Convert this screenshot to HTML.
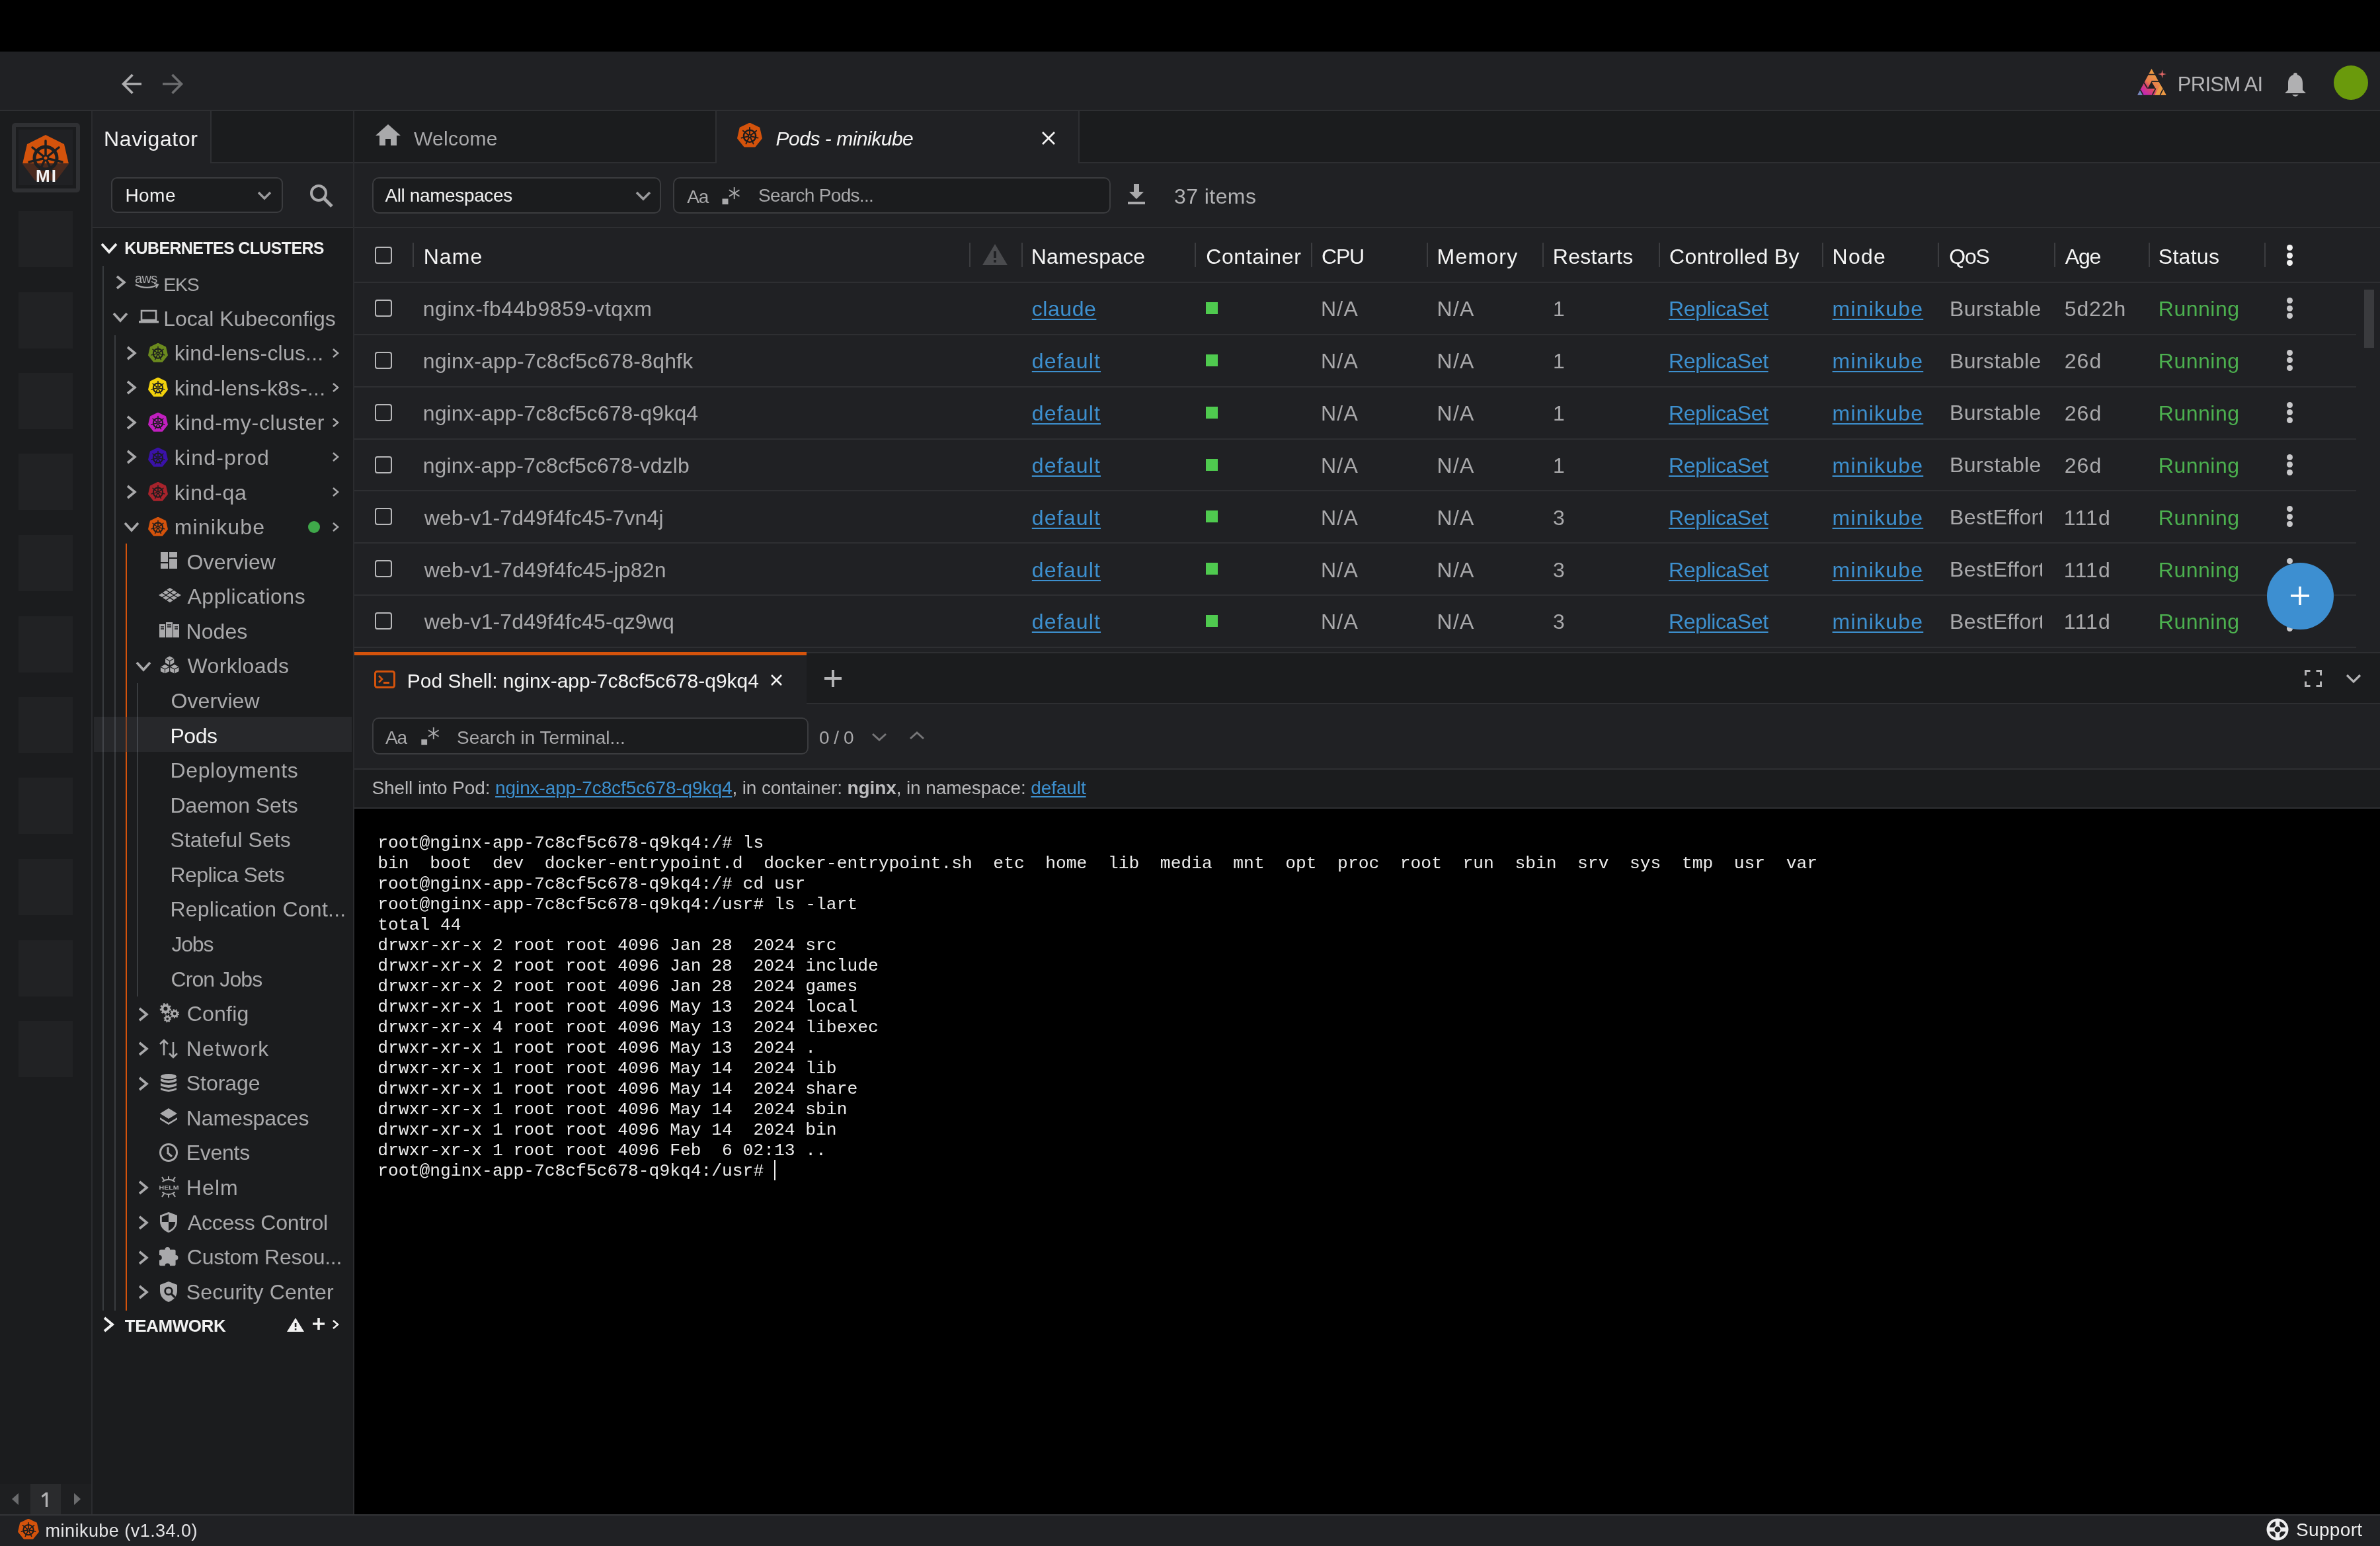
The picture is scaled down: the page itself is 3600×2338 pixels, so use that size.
<!DOCTYPE html>
<html><head><meta charset="utf-8"><title>Lens</title>
<style>
html,body{margin:0;padding:0;}
body{width:3600px;height:2338px;position:relative;overflow:hidden;background:#000;font-family:"Liberation Sans",sans-serif;}
body div, body svg{position:absolute;} svg{overflow:visible;}
.t{white-space:nowrap;line-height:1;}
</style></head><body><div id="root" style="left:0;top:0;width:3600px;height:2338px;overflow:hidden;will-change:transform;background:#000;">
<svg width="0" height="0" style="position:absolute">
<defs>
<symbol id="k8s" viewBox="0 0 100 100">
<polygon points="50,2 87.5,20 96.8,60.5 70.8,93 29.2,93 3.2,60.5 12.5,20" stroke-linejoin="round" stroke-width="6" stroke="currentColor" fill="currentColor"/>
<g stroke="#1b1c1e" fill="none" stroke-width="6.5">
<circle cx="50" cy="52" r="24"/>
</g>
<g stroke="#1b1c1e" stroke-width="5" stroke-linecap="round">
<line x1="50" y1="52" x2="50" y2="18"/>
<line x1="50" y1="52" x2="76.6" y2="30.8"/>
<line x1="50" y1="52" x2="83.1" y2="59.6"/>
<line x1="50" y1="52" x2="64.7" y2="82.6"/>
<line x1="50" y1="52" x2="35.3" y2="82.6"/>
<line x1="50" y1="52" x2="16.9" y2="59.6"/>
<line x1="50" y1="52" x2="23.4" y2="30.8"/>
</g>
<circle cx="50" cy="52" r="7" fill="#1b1c1e"/>
<circle cx="50" cy="52" r="3" fill="currentColor"/>
</symbol>
</defs>
</svg>

<div style="left:0px;top:78px;width:3600px;height:88px;background:#202124;"></div>
<div style="left:0px;top:166px;width:3600px;height:2px;background:#2e2f32;"></div>
<svg style="left:180px;top:110px;" width="36" height="34" viewBox="0 0 36 34"><path d="M34 17H7M20.5 3L6.5 17L20.5 31" stroke="#aeaeb0" stroke-width="3.6" fill="none"/></svg>
<svg style="left:244px;top:110px;" width="36" height="34" viewBox="0 0 36 34"><path d="M2 17H30M16.5 3L30.5 17L16.5 31" stroke="#6c6d6f" stroke-width="3.6" fill="none"/></svg>
<svg style="left:3225px;top:95px;" width="60" height="55" viewBox="0 0 60 55"><defs><linearGradient id="pg" x1="0.75" y1="0.35" x2="0.2" y2="0.95"><stop offset="0" stop-color="#eb9a44"/><stop offset="0.45" stop-color="#e87a4e"/><stop offset="0.62" stop-color="#d9436a"/><stop offset="1" stop-color="#c426b8"/></linearGradient></defs>
<path d="M29.5 8.9 L51.6 48.7 L8.2 48.7 Z M29.3 28.2 L23.4 38.9 L35.7 38.9 Z" fill="url(#pg)" fill-rule="evenodd"/>
<path d="M34 48.7 L51.6 48.7 L43 33 Z" fill="#eb9a44"/>
<path d="M8.2 48.7 L16.5 48.7 L12.3 41.2 Z" fill="#6a8fb8"/>
<g stroke="#202124" stroke-width="1.7" fill="none">
<path d="M22 17.6 H37"/><path d="M29.3 28.2 H41"/><path d="M23.4 38.9 L18 29.8"/><path d="M35.7 38.9 L30.5 48.7"/><path d="M12.5 41 L16.8 48.7"/><path d="M46.5 40.3 L42.4 48.7"/>
</g>
<path d="M45.5 10.5 L46.6 16 L52 17.1 L46.6 18.2 L45.5 23.6 L44.4 18.2 L39 17.1 L44.4 16 Z" fill="#ea6a6a"/></svg>
<div class="t" style="left:3293.8px;top:111.86px;font-size:31px;color:#b4b4b6;font-weight:normal;font-family:'Liberation Sans';letter-spacing:-0.714px;">PRISM AI</div>
<svg style="left:3454px;top:106px;" width="36" height="42" viewBox="0 0 36 42"><path d="M18 4 C20 4 21 5 21 7 C27 9 29 14 29 20 L29 30 L34 35 L2 35 L7 30 L7 20 C7 14 9 9 15 7 C15 5 16 4 18 4 Z" fill="#b0b0b2"/>
<path d="M13 37 Q18 43 23 37 Z" fill="#b0b0b2"/></svg>
<div style="left:3530px;top:99px;width:52px;height:52px;border-radius:50%;background:#6a9a0c;"></div>
<div style="left:0px;top:168px;width:138px;height:2122px;background:#1b1c1e;"></div>
<div style="left:138px;top:168px;width:2px;height:2122px;background:#2b2c2f;"></div>
<div style="left:18px;top:186px;width:91px;height:93px;border:6px solid #2f3033;border-radius:5px;background:#1b1c1e;"></div>
<div style="left:28px;top:196px;width:82px;height:84px;background:#202124;"></div>
<svg style="left:30px;top:201px;" width="78" height="82" viewBox="0 0 78 82"><defs><clipPath id="topc"><rect x="0" y="0" width="78" height="46"/></clipPath><clipPath id="botc"><rect x="0" y="46" width="78" height="40"/></clipPath></defs>
<g clip-path="url(#botc)"><polygon points="39,3 67,17 74,47 55,72 23,72 4,47 11,17" fill="#4a2a1e"/></g>
<g clip-path="url(#topc)"><polygon points="39,3 67,17 74,47 55,72 23,72 4,47 11,17" fill="#d4530c"/></g>
<g stroke="#1e1f21" fill="none" stroke-width="5"><circle cx="39" cy="38" r="17"/></g>
<g stroke="#1e1f21" stroke-width="3.5" stroke-linecap="round">
<line x1="39" y1="38" x2="39" y2="12"/><line x1="39" y1="38" x2="59" y2="22"/><line x1="39" y1="38" x2="64" y2="44"/><line x1="39" y1="38" x2="50" y2="61"/><line x1="39" y1="38" x2="28" y2="61"/><line x1="39" y1="38" x2="14" y2="44"/><line x1="39" y1="38" x2="19" y2="22"/></g>
<circle cx="39" cy="38" r="5" fill="#1e1f21"/><circle cx="39" cy="38" r="2.5" fill="#d4530c"/></svg>
<div class="t" style="left:54px;top:253.09px;font-size:26px;color:#f4f4f4;font-weight:bold;font-family:'Liberation Sans';letter-spacing:2.2px;">MI</div>
<div style="left:28px;top:319px;width:82px;height:85px;background:#212224;"></div>
<div style="left:28px;top:442px;width:82px;height:85px;background:#212224;"></div>
<div style="left:28px;top:564px;width:82px;height:85px;background:#212224;"></div>
<div style="left:28px;top:686px;width:82px;height:85px;background:#212224;"></div>
<div style="left:28px;top:809px;width:82px;height:85px;background:#212224;"></div>
<div style="left:28px;top:932px;width:82px;height:85px;background:#212224;"></div>
<div style="left:28px;top:1054px;width:82px;height:85px;background:#212224;"></div>
<div style="left:28px;top:1176px;width:82px;height:85px;background:#212224;"></div>
<div style="left:28px;top:1299px;width:82px;height:85px;background:#212224;"></div>
<div style="left:28px;top:1422px;width:82px;height:85px;background:#212224;"></div>
<div style="left:28px;top:1544px;width:82px;height:85px;background:#212224;"></div>
<div style="left:0px;top:2244px;width:138px;height:46px;background:#1e1f21;"></div>
<div style="left:46px;top:2244px;width:46px;height:46px;background:#2a2b2d;"></div>
<svg style="left:16px;top:2256px;" width="14" height="22" viewBox="0 0 14 22"><path d="M12 2 L2 11 L12 20 Z" fill="#6a6b6d"/></svg>
<svg style="left:110px;top:2256px;" width="14" height="22" viewBox="0 0 14 22"><path d="M2 2 L12 11 L2 20 Z" fill="#6a6b6d"/></svg>
<svg style="left:60px;top:2254px;" width="16" height="28" viewBox="0 0 16 28"><path d="M10.5 3 V25" stroke="#b2b2b4" stroke-width="3.3"/><path d="M3.5 9.5 L10.5 3.8" stroke="#b2b2b4" stroke-width="3"/></svg>
<div style="left:140px;top:168px;width:394px;height:79px;background:#1b1c1e;"></div>
<div style="left:140px;top:168px;width:178px;height:79px;background:#202124;"></div>
<div style="left:318px;top:168px;width:2px;height:79px;background:#2e2f32;"></div>
<div style="left:320px;top:245px;width:214px;height:2px;background:#2e2f32;"></div>
<div style="left:140px;top:247px;width:394px;height:96px;background:#202124;"></div>
<div style="left:140px;top:343px;width:394px;height:2px;background:#2e2f32;"></div>
<div style="left:140px;top:345px;width:394px;height:1945px;background:#1b1c1e;"></div>
<div style="left:534px;top:168px;width:2px;height:2122px;background:#2b2c2f;"></div>
<div class="t" style="left:157px;top:194.01px;font-size:32px;color:#f1f1f1;font-weight:normal;font-family:'Liberation Sans';letter-spacing:0.625px;">Navigator</div>
<div style="left:168px;top:268px;width:256px;height:50px;border:2px solid #3b3c3f;border-radius:9px;background:#1b1c1e;"></div>
<div class="t" style="left:189.4px;top:281.90px;font-size:28px;color:#f1f1f1;font-weight:normal;font-family:'Liberation Sans';letter-spacing:0.467px;">Home</div>
<svg style="left:388px;top:288px;" width="24" height="16" viewBox="0 0 24 16"><path d="M3 3 L12 12 L21 3" stroke="#9a9a9c" stroke-width="3.4" fill="none"/></svg>
<svg style="left:466px;top:276px;" width="40" height="40" viewBox="0 0 40 40"><circle cx="16" cy="16" r="11" stroke="#a9a9ab" stroke-width="4" fill="none"/><path d="M24 24 L36 36" stroke="#a9a9ab" stroke-width="5"/></svg>
<svg style="left:151px;top:366px;" width="28" height="19" viewBox="0 0 28 19"><path d="M3 3 L14.0 15 L25 3" stroke="#f1f1f1" stroke-width="4" fill="none"/></svg>
<div class="t" style="left:188.2px;top:362.64px;font-size:25px;color:#f1f1f1;font-weight:bold;font-family:'Liberation Sans';letter-spacing:-0.644px;">KUBERNETES CLUSTERS</div>
<div style="left:142px;top:1084px;width:390px;height:53px;background:#27282b;"></div>
<div style="left:155px;top:402px;width:2px;height:1580px;background:#393c3f;"></div>
<div style="left:173px;top:507px;width:2px;height:1475px;background:#393c3f;"></div>
<div style="left:190px;top:822px;width:2px;height:1160px;background:#d4530c;"></div>
<div style="left:207px;top:1033px;width:2px;height:474px;background:#393c3f;"></div>
<div style="left:155px;top:1084px;width:2px;height:53px;background:#42454a;"></div>
<div style="left:173px;top:1084px;width:2px;height:53px;background:#42454a;"></div>
<div style="left:207px;top:1084px;width:2px;height:53px;background:#42454a;"></div>
<div style="left:190px;top:1084px;width:2px;height:53px;background:#8a4421;"></div>
<svg style="left:174px;top:415px;" width="18" height="24" viewBox="0 0 18 24"><path d="M3 3 L14 12.0 L3 21" stroke="#a9a9ab" stroke-width="3.6" fill="none"/></svg>
<svg style="left:203px;top:412px;" width="40" height="28" viewBox="0 0 40 28"><text x="1" y="15.5" font-family="Liberation Sans" font-size="20" fill="#a9a9ab" letter-spacing="-0.6">aws</text>
<path d="M2 18.5 Q19 27 35 19" stroke="#a9a9ab" stroke-width="2.2" fill="none"/><path d="M30 16.5 L36 18.5 L33 23.5" stroke="#a9a9ab" stroke-width="2" fill="none"/></svg>
<div class="t" style="left:247.2px;top:416.07px;font-size:28.5px;color:#a9a9ab;font-weight:normal;font-family:'Liberation Sans';letter-spacing:-1.2px;">EKS</div>
<svg style="left:169px;top:471px;" width="26" height="18" viewBox="0 0 26 18"><path d="M3 3 L13.0 14 L23 3" stroke="#a9a9ab" stroke-width="3.6" fill="none"/></svg>
<svg style="left:210px;top:468px;" width="30" height="22" viewBox="0 0 30 22"><rect x="4" y="2" width="22" height="14" stroke="#a9a9ab" stroke-width="2.6" fill="none"/><rect x="0" y="17" width="30" height="3.5" fill="#a9a9ab"/></svg>
<div class="t" style="left:247.2px;top:465.68px;font-size:32px;color:#a9a9ab;font-weight:normal;font-family:'Liberation Sans';letter-spacing:-0.062px;">Local Kubeconfigs</div>
<svg style="left:190px;top:521.74px;" width="18" height="24" viewBox="0 0 18 24"><path d="M3 3 L14 12.0 L3 21" stroke="#a9a9ab" stroke-width="3.6" fill="none"/></svg>
<svg style="left:223.5px;top:518.7px;color:#6b8a1e" width="30" height="30" viewBox="0 0 100 100"><use href="#k8s"/></svg>
<div class="t" style="left:263.7px;top:518.25px;font-size:32px;color:#a9a9ab;font-weight:normal;font-family:'Liberation Sans';letter-spacing:0.2px;">kind-lens-clus...</div>
<svg style="left:501px;top:524.74px;" width="14" height="18" viewBox="0 0 14 18"><path d="M3 3 L10 9.0 L3 15" stroke="#a9a9ab" stroke-width="2.6" fill="none"/></svg>
<svg style="left:190px;top:574.3100000000001px;" width="18" height="24" viewBox="0 0 18 24"><path d="M3 3 L14 12.0 L3 21" stroke="#a9a9ab" stroke-width="3.6" fill="none"/></svg>
<svg style="left:223.5px;top:571.3px;color:#f2d10c" width="30" height="30" viewBox="0 0 100 100"><use href="#k8s"/></svg>
<div class="t" style="left:263.7px;top:570.82px;font-size:32px;color:#a9a9ab;font-weight:normal;font-family:'Liberation Sans';letter-spacing:0.156px;">kind-lens-k8s-...</div>
<svg style="left:501px;top:577.3100000000001px;" width="14" height="18" viewBox="0 0 14 18"><path d="M3 3 L10 9.0 L3 15" stroke="#a9a9ab" stroke-width="2.6" fill="none"/></svg>
<svg style="left:190px;top:626.88px;" width="18" height="24" viewBox="0 0 18 24"><path d="M3 3 L14 12.0 L3 21" stroke="#a9a9ab" stroke-width="3.6" fill="none"/></svg>
<svg style="left:223.5px;top:623.9px;color:#c11fbf" width="30" height="30" viewBox="0 0 100 100"><use href="#k8s"/></svg>
<div class="t" style="left:263.7px;top:623.39px;font-size:32px;color:#a9a9ab;font-weight:normal;font-family:'Liberation Sans';letter-spacing:0.693px;">kind-my-cluster</div>
<svg style="left:501px;top:629.88px;" width="14" height="18" viewBox="0 0 14 18"><path d="M3 3 L10 9.0 L3 15" stroke="#a9a9ab" stroke-width="2.6" fill="none"/></svg>
<svg style="left:190px;top:679.45px;" width="18" height="24" viewBox="0 0 18 24"><path d="M3 3 L14 12.0 L3 21" stroke="#a9a9ab" stroke-width="3.6" fill="none"/></svg>
<svg style="left:223.5px;top:676.5px;color:#3a12a8" width="30" height="30" viewBox="0 0 100 100"><use href="#k8s"/></svg>
<div class="t" style="left:263.7px;top:675.96px;font-size:32px;color:#a9a9ab;font-weight:normal;font-family:'Liberation Sans';letter-spacing:1.2px;">kind-prod</div>
<svg style="left:501px;top:682.45px;" width="14" height="18" viewBox="0 0 14 18"><path d="M3 3 L10 9.0 L3 15" stroke="#a9a9ab" stroke-width="2.6" fill="none"/></svg>
<svg style="left:190px;top:732.02px;" width="18" height="24" viewBox="0 0 18 24"><path d="M3 3 L14 12.0 L3 21" stroke="#a9a9ab" stroke-width="3.6" fill="none"/></svg>
<svg style="left:223.5px;top:729.0px;color:#a8232c" width="30" height="30" viewBox="0 0 100 100"><use href="#k8s"/></svg>
<div class="t" style="left:263.7px;top:728.53px;font-size:32px;color:#a9a9ab;font-weight:normal;font-family:'Liberation Sans';letter-spacing:0.683px;">kind-qa</div>
<svg style="left:501px;top:735.02px;" width="14" height="18" viewBox="0 0 14 18"><path d="M3 3 L10 9.0 L3 15" stroke="#a9a9ab" stroke-width="2.6" fill="none"/></svg>
<svg style="left:186px;top:787.59px;" width="26" height="18" viewBox="0 0 26 18"><path d="M3 3 L13.0 14 L23 3" stroke="#a9a9ab" stroke-width="3.6" fill="none"/></svg>
<svg style="left:223.5px;top:781.6px;color:#d4530c" width="30" height="30" viewBox="0 0 100 100"><use href="#k8s"/></svg>
<div class="t" style="left:263.7px;top:781.10px;font-size:32px;color:#a9a9ab;font-weight:normal;font-family:'Liberation Sans';letter-spacing:1.2px;">minikube</div>
<svg style="left:501px;top:787.59px;" width="14" height="18" viewBox="0 0 14 18"><path d="M3 3 L10 9.0 L3 15" stroke="#a9a9ab" stroke-width="2.6" fill="none"/></svg>
<div style="left:466px;top:787.6px;width:18px;height:18px;border-radius:50%;background:#3fa84a;"></div>
<svg style="left:242px;top:834.1600000000001px;" width="30" height="30" viewBox="0 0 30 30"><rect x="1" y="1" width="11" height="15" fill="#a9a9ab"/><rect x="14" y="1" width="12" height="8" fill="#a9a9ab"/><rect x="1" y="18" width="11" height="8" fill="#a9a9ab"/><rect x="14" y="11" width="12" height="15" fill="#a9a9ab"/></svg>
<div class="t" style="left:282.5px;top:833.67px;font-size:32px;color:#a9a9ab;font-weight:normal;font-family:'Liberation Sans';letter-spacing:0.157px;">Overview</div>
<svg style="left:240px;top:886.73px;" width="30" height="30" viewBox="0 0 30 30"><path d="M12 5 l5 -3 l5 3 l-5 3 Z" fill="#a9a9ab"/><path d="M6 9 l5 -3 l5 3 l-5 3 Z" fill="#a9a9ab"/><path d="M18 9 l5 -3 l5 3 l-5 3 Z" fill="#a9a9ab"/><path d="M0 13 l5 -3 l5 3 l-5 3 Z" fill="#a9a9ab"/><path d="M12 13 l5 -3 l5 3 l-5 3 Z" fill="#a9a9ab"/><path d="M24 13 l5 -3 l5 3 l-5 3 Z" fill="#a9a9ab"/><path d="M6 17 l5 -3 l5 3 l-5 3 Z" fill="#a9a9ab"/><path d="M18 17 l5 -3 l5 3 l-5 3 Z" fill="#a9a9ab"/><path d="M12 21 l5 -3 l5 3 l-5 3 Z" fill="#a9a9ab"/></svg>
<div class="t" style="left:283.5px;top:886.24px;font-size:32px;color:#a9a9ab;font-weight:normal;font-family:'Liberation Sans';letter-spacing:0.509px;">Applications</div>
<svg style="left:240px;top:939.3000000000001px;" width="30" height="30" viewBox="0 0 30 30"><rect x="1" y="5" width="9" height="20" fill="#a9a9ab"/><rect x="11" y="2" width="10" height="23" fill="#a9a9ab"/><rect x="22" y="5" width="9" height="20" fill="#a9a9ab"/><g stroke="#1b1c1e" stroke-width="1.6"><line x1="3" y1="9" x2="8" y2="9"/><line x1="3" y1="12" x2="8" y2="12"/><line x1="13" y1="6" x2="19" y2="6"/><line x1="13" y1="9" x2="19" y2="9"/><line x1="24" y1="9" x2="29" y2="9"/><line x1="24" y1="12" x2="29" y2="12"/></g></svg>
<div class="t" style="left:281.5px;top:938.81px;font-size:32px;color:#a9a9ab;font-weight:normal;font-family:'Liberation Sans';letter-spacing:0.075px;">Nodes</div>
<svg style="left:204px;top:998.87px;" width="26" height="18" viewBox="0 0 26 18"><path d="M3 3 L13.0 14 L23 3" stroke="#a9a9ab" stroke-width="3.6" fill="none"/></svg>
<svg style="left:240px;top:991.87px;" width="30" height="30" viewBox="0 0 30 30"><path d="M16.7 -0.3 L23.9 3.6 L23.9 10.799999999999999 L16.7 14.7 L9.5 10.799999999999999 L9.5 3.6 Z" fill="#a9a9ab" stroke="#1b1c1e" stroke-width="1.1" stroke-linejoin="round"/><path d="M9.5 3.6 L16.7 7.5 L23.9 3.6 M16.7 7.5 V14.7" stroke="#1b1c1e" stroke-width="1.1" fill="none"/><path d="M9.5 12.3 L16.7 16.2 L16.7 23.4 L9.5 27.3 L2.3 23.4 L2.3 16.2 Z" fill="#a9a9ab" stroke="#1b1c1e" stroke-width="1.1" stroke-linejoin="round"/><path d="M2.3 16.2 L9.5 20.1 L16.7 16.2 M9.5 20.1 V27.3" stroke="#1b1c1e" stroke-width="1.1" fill="none"/><path d="M23.9 12.3 L31.099999999999998 16.2 L31.099999999999998 23.4 L23.9 27.3 L16.7 23.4 L16.7 16.2 Z" fill="#a9a9ab" stroke="#1b1c1e" stroke-width="1.1" stroke-linejoin="round"/><path d="M16.7 16.2 L23.9 20.1 L31.099999999999998 16.2 M23.9 20.1 V27.3" stroke="#1b1c1e" stroke-width="1.1" fill="none"/></svg>
<div class="t" style="left:283.5px;top:991.38px;font-size:32px;color:#a9a9ab;font-weight:normal;font-family:'Liberation Sans';letter-spacing:0.375px;">Workloads</div>
<div class="t" style="left:258.4px;top:1043.95px;font-size:32px;color:#a9a9ab;font-weight:normal;font-family:'Liberation Sans';letter-spacing:0.129px;">Overview</div>
<div class="t" style="left:257.4px;top:1096.52px;font-size:32px;color:#f4f4f4;font-weight:normal;font-family:'Liberation Sans';letter-spacing:-0.433px;">Pods</div>
<div class="t" style="left:257.4px;top:1149.09px;font-size:32px;color:#a9a9ab;font-weight:normal;font-family:'Liberation Sans';letter-spacing:0.67px;">Deployments</div>
<div class="t" style="left:257.4px;top:1201.66px;font-size:32px;color:#a9a9ab;font-weight:normal;font-family:'Liberation Sans';letter-spacing:-0.06px;">Daemon Sets</div>
<div class="t" style="left:257.4px;top:1254.23px;font-size:32px;color:#a9a9ab;font-weight:normal;font-family:'Liberation Sans';letter-spacing:0.083px;">Stateful Sets</div>
<div class="t" style="left:257.4px;top:1306.80px;font-size:32px;color:#a9a9ab;font-weight:normal;font-family:'Liberation Sans';letter-spacing:-0.564px;">Replica Sets</div>
<div class="t" style="left:257.4px;top:1359.37px;font-size:32px;color:#a9a9ab;font-weight:normal;font-family:'Liberation Sans';letter-spacing:0.239px;">Replication Cont...</div>
<div class="t" style="left:259.4px;top:1411.94px;font-size:32px;color:#a9a9ab;font-weight:normal;font-family:'Liberation Sans';letter-spacing:-1.2px;">Jobs</div>
<div class="t" style="left:258.4px;top:1464.51px;font-size:32px;color:#a9a9ab;font-weight:normal;font-family:'Liberation Sans';letter-spacing:-0.875px;">Cron Jobs</div>
<svg style="left:208px;top:1521.5700000000002px;" width="18" height="24" viewBox="0 0 18 24"><path d="M3 3 L14 12.0 L3 21" stroke="#a9a9ab" stroke-width="3.6" fill="none"/></svg>
<svg style="left:240px;top:1517.5700000000002px;" width="30" height="30" viewBox="0 0 30 30"><circle cx="10.4" cy="7.6" r="6.786" fill="#a9a9ab"/><circle cx="10.4" cy="7.6" r="7.481999999999999" fill="none" stroke="#a9a9ab" stroke-width="2.436" stroke-dasharray="2.61 2.61"/><circle cx="10.4" cy="7.6" r="3.0" fill="#1b1c1e"/><circle cx="24.1" cy="15" r="5.46" fill="#a9a9ab"/><circle cx="24.1" cy="15" r="6.02" fill="none" stroke="#a9a9ab" stroke-width="1.9600000000000002" stroke-dasharray="2.10 2.10"/><circle cx="24.1" cy="15" r="2.4" fill="#1b1c1e"/><circle cx="13.3" cy="22.6" r="4.524" fill="#a9a9ab"/><circle cx="13.3" cy="22.6" r="4.9879999999999995" fill="none" stroke="#a9a9ab" stroke-width="1.624" stroke-dasharray="1.96 1.96"/><circle cx="13.3" cy="22.6" r="1.9" fill="#1b1c1e"/></svg>
<div class="t" style="left:282.8px;top:1517.08px;font-size:32px;color:#a9a9ab;font-weight:normal;font-family:'Liberation Sans';letter-spacing:0.2px;">Config</div>
<svg style="left:208px;top:1574.1399999999999px;" width="18" height="24" viewBox="0 0 18 24"><path d="M3 3 L14 12.0 L3 21" stroke="#a9a9ab" stroke-width="3.6" fill="none"/></svg>
<svg style="left:240px;top:1570.1399999999999px;" width="30" height="30" viewBox="0 0 30 30"><g stroke="#a9a9ab" stroke-width="2.6" fill="none"><path d="M8 26 V3 M2 9 L8 3 L14 9"/><path d="M22 6 V29 M16 23 L22 29 L28 23"/></g></svg>
<div class="t" style="left:281.8px;top:1569.65px;font-size:32px;color:#a9a9ab;font-weight:normal;font-family:'Liberation Sans';letter-spacing:1.2px;">Network</div>
<svg style="left:208px;top:1626.71px;" width="18" height="24" viewBox="0 0 18 24"><path d="M3 3 L14 12.0 L3 21" stroke="#a9a9ab" stroke-width="3.6" fill="none"/></svg>
<svg style="left:240px;top:1622.71px;" width="30" height="30" viewBox="0 0 30 30"><g fill="#a9a9ab"><ellipse cx="15" cy="5" rx="12" ry="4"/><path d="M3 8 Q15 14 27 8 V12 Q15 18 3 12 Z"/><path d="M3 15 Q15 21 27 15 V19 Q15 25 3 19 Z"/><path d="M3 22 Q15 28 27 22 V25 Q15 31 3 25 Z"/></g></svg>
<div class="t" style="left:281.8px;top:1622.22px;font-size:32px;color:#a9a9ab;font-weight:normal;font-family:'Liberation Sans';letter-spacing:-0.05px;">Storage</div>
<svg style="left:240px;top:1675.2800000000002px;" width="30" height="30" viewBox="0 0 30 30"><path d="M15 1 L28 9 L15 17 L2 9 Z" fill="#a9a9ab"/><path d="M2 15 L15 23 L28 15 L28 18 L15 26 L2 18 Z" fill="#a9a9ab"/></svg>
<div class="t" style="left:281.8px;top:1674.79px;font-size:32px;color:#a9a9ab;font-weight:normal;font-family:'Liberation Sans';letter-spacing:-0.111px;">Namespaces</div>
<svg style="left:240px;top:1727.85px;" width="30" height="30" viewBox="0 0 30 30"><circle cx="15" cy="15" r="12.5" stroke="#a9a9ab" stroke-width="3" fill="none"/><path d="M14 7 V16 L20 21" stroke="#a9a9ab" stroke-width="3" fill="none"/></svg>
<div class="t" style="left:281.8px;top:1727.36px;font-size:32px;color:#a9a9ab;font-weight:normal;font-family:'Liberation Sans';letter-spacing:-0.3px;">Events</div>
<svg style="left:208px;top:1784.42px;" width="18" height="24" viewBox="0 0 18 24"><path d="M3 3 L14 12.0 L3 21" stroke="#a9a9ab" stroke-width="3.6" fill="none"/></svg>
<svg style="left:240px;top:1780.42px;" width="30" height="30" viewBox="0 0 30 30"><g stroke="#a9a9ab" stroke-width="2" fill="none"><path d="M5.5 7 Q15 0.5 24.5 7"/><path d="M5.5 23 Q15 29.5 24.5 23"/><line x1="15" y1="-1" x2="15" y2="4"/><line x1="5" y1="0" x2="8" y2="4.5"/><line x1="25" y1="0" x2="22" y2="4.5"/><line x1="15" y1="26" x2="15" y2="31"/><line x1="5" y1="30" x2="8" y2="25.5"/><line x1="25" y1="30" x2="22" y2="25.5"/></g><text x="0.5" y="19" font-family="Liberation Sans" font-weight="bold" font-size="9.5" fill="#a9a9ab" textLength="30" lengthAdjust="spacingAndGlyphs">HELM</text></svg>
<div class="t" style="left:281.8px;top:1779.93px;font-size:32px;color:#a9a9ab;font-weight:normal;font-family:'Liberation Sans';letter-spacing:1.1px;">Helm</div>
<svg style="left:208px;top:1836.9900000000002px;" width="18" height="24" viewBox="0 0 18 24"><path d="M3 3 L14 12.0 L3 21" stroke="#a9a9ab" stroke-width="3.6" fill="none"/></svg>
<svg style="left:240px;top:1832.9900000000002px;" width="30" height="30" viewBox="0 0 30 30"><path d="M15 0 L28 5 V14 C28 22.5 22 28.5 15 31 C8 28.5 2 22.5 2 14 V5 Z" fill="#a9a9ab"/><path d="M15 3.3 V15 H4.8 V7 Z M15 15 H25.2 C24.8 21.5 20.5 26 15 28 Z" fill="#1b1c1e"/></svg>
<div class="t" style="left:283.8px;top:1832.50px;font-size:32px;color:#a9a9ab;font-weight:normal;font-family:'Liberation Sans';letter-spacing:-0.215px;">Access Control</div>
<svg style="left:208px;top:1889.56px;" width="18" height="24" viewBox="0 0 18 24"><path d="M3 3 L14 12.0 L3 21" stroke="#a9a9ab" stroke-width="3.6" fill="none"/></svg>
<svg style="left:240px;top:1885.56px;" width="30" height="30" viewBox="0 0 30 30"><path d="M2 6.5 H8.5 A3.8 3.8 0 1 1 16.1 6.5 H22.6 Q24.6 6.5 24.6 8.5 V14.9 A3.8 3.8 0 1 1 24.6 22.5 V29 Q24.6 31 22.6 31 H16.1 A3.8 3.8 0 1 0 8.5 31 H2 Q0 31 0 29 V22.5 A3.8 3.8 0 1 0 0 14.9 V8.5 Q0 6.5 2 6.5 Z" fill="#a9a9ab" transform="translate(1,-2.8)"/></svg>
<div class="t" style="left:282.8px;top:1885.07px;font-size:32px;color:#a9a9ab;font-weight:normal;font-family:'Liberation Sans';letter-spacing:-0.271px;">Custom Resou...</div>
<svg style="left:208px;top:1942.13px;" width="18" height="24" viewBox="0 0 18 24"><path d="M3 3 L14 12.0 L3 21" stroke="#a9a9ab" stroke-width="3.6" fill="none"/></svg>
<svg style="left:240px;top:1938.13px;" width="30" height="30" viewBox="0 0 30 30"><path d="M15 0 L28 5 V14 C28 22.5 22 28.5 15 31 C8 28.5 2 22.5 2 14 V5 Z" fill="#a9a9ab"/><circle cx="15" cy="14.5" r="5.3" stroke="#1b1c1e" stroke-width="2.8" fill="none"/><path d="M18.8 18.3 L24.5 24" stroke="#1b1c1e" stroke-width="3.2"/></svg>
<div class="t" style="left:281.8px;top:1937.64px;font-size:32px;color:#a9a9ab;font-weight:normal;font-family:'Liberation Sans';letter-spacing:0.164px;">Security Center</div>
<svg style="left:155px;top:1989.6px;" width="19" height="26" viewBox="0 0 19 26"><path d="M3 3 L15 13.0 L3 23" stroke="#f1f1f1" stroke-width="4" fill="none"/></svg>
<div class="t" style="left:188.7px;top:1992.19px;font-size:26px;color:#f1f1f1;font-weight:bold;font-family:'Liberation Sans';letter-spacing:-0.429px;">TEAMWORK</div>
<svg style="left:432px;top:1991px;" width="30" height="25" viewBox="0 0 30 25"><path d="M15 2 L28 23 L2 23 Z" fill="#f1f1f1"/><rect x="13.8" y="10" width="2.6" height="6" fill="#1b1c1e"/><rect x="13.8" y="18" width="2.6" height="2.6" fill="#1b1c1e"/></svg>
<svg style="left:472px;top:1992px;" width="20" height="20" viewBox="0 0 20 20"><path d="M10 1 V19 M1 10 H19" stroke="#f1f1f1" stroke-width="3.6"/></svg>
<svg style="left:501px;top:1994px;" width="14" height="18" viewBox="0 0 14 18"><path d="M3 3 L10 9.0 L3 15" stroke="#f1f1f1" stroke-width="2.6" fill="none"/></svg>
<div style="left:536px;top:168px;width:3064px;height:79px;background:#1b1c1e;"></div>
<div style="left:536px;top:245px;width:3064px;height:2px;background:#2e2f32;"></div>
<div style="left:1082px;top:168px;width:2px;height:79px;background:#2e2f32;"></div>
<svg style="left:566px;top:186px;" width="42" height="36" viewBox="0 0 42 36"><path d="M21 2 L40 19 L34 19 L34 34 L25 34 L25 24 L17 24 L17 34 L8 34 L8 19 L2 19 Z" fill="#a9a9ab"/></svg>
<div class="t" style="left:626px;top:194.70px;font-size:30px;color:#a9a9ab;font-weight:normal;font-family:'Liberation Sans';letter-spacing:0.333px;">Welcome</div>
<div style="left:1084px;top:168px;width:547px;height:79px;background:#202124;"></div>
<div style="left:1631px;top:168px;width:2px;height:79px;background:#2e2f32;"></div>
<svg style="left:1115px;top:186px;color:#d4530c" width="38" height="38" viewBox="0 0 100 100"><use href="#k8s"/></svg>
<div class="t" style="left:1173.5px;top:194.70px;font-size:30px;color:#f4f4f4;font-weight:normal;font-family:'Liberation Sans';letter-spacing:-0.486px;font-style:italic;">Pods - minikube</div>
<svg style="left:1575px;top:198px;" width="22" height="22" viewBox="0 0 22 22"><path d="M2 2 L20 20 M20 2 L2 20" stroke="#f1f1f1" stroke-width="2.8"/></svg>
<div style="left:536px;top:247px;width:3064px;height:96px;background:#202124;"></div>
<div style="left:536px;top:343px;width:3064px;height:2px;background:#2e2f32;"></div>
<div style="left:563px;top:268px;width:433px;height:51px;border:2px solid #3b3c3f;border-radius:10px;background:#1b1c1e;"></div>
<div class="t" style="left:582.4px;top:282.40px;font-size:28px;color:#f1f1f1;font-weight:normal;font-family:'Liberation Sans';letter-spacing:-0.377px;">All namespaces</div>
<svg style="left:960px;top:288px;" width="26" height="17" viewBox="0 0 26 17"><path d="M3 3 L13 13 L23 3" stroke="#9a9a9c" stroke-width="3.6" fill="none"/></svg>
<div style="left:1018px;top:268px;width:658px;height:51px;border:2px solid #3b3c3f;border-radius:10px;background:#1b1c1e;"></div>
<div class="t" style="left:1039.3px;top:283.90px;font-size:28px;color:#a9a9ab;font-weight:normal;font-family:'Liberation Sans';letter-spacing:-1.2px;">Aa</div>
<svg style="left:1092px;top:282px;" width="30" height="30" viewBox="0 0 30 30"><rect x="0.5" y="18.5" width="9" height="8.6" fill="#a9a9ab"/><g stroke="#a9a9ab" stroke-width="1.9"><path d="M18.7 1.0999999999999996 V19.1"/><path d="M10.899999999999999 5.3 L26.5 14.899999999999999"/><path d="M10.899999999999999 14.899999999999999 L26.5 5.3"/></g></svg>
<div class="t" style="left:1147px;top:282.40px;font-size:28px;color:#a9a9ab;font-weight:normal;font-family:'Liberation Sans';letter-spacing:-0.677px;">Search Pods...</div>
<svg style="left:1704px;top:276px;" width="30" height="36" viewBox="0 0 30 36"><path d="M11 2 H19 V14 H26 L15 25 L4 14 H11 Z" fill="#a9a9ab"/><rect x="2" y="29" width="26" height="4" fill="#a9a9ab"/></svg>
<div class="t" style="left:1776px;top:280.51px;font-size:32px;color:#b2b2b4;font-weight:normal;font-family:'Liberation Sans';letter-spacing:0.429px;">37 items</div>
<div style="left:536px;top:345px;width:3064px;height:641px;background:#202124;"></div>
<div style="left:536px;top:426px;width:3064px;height:2px;background:#2e2f32;"></div>
<div style="left:567px;top:373px;width:22px;height:22px;border:2.5px solid #b8b8ba;border-radius:4px;"></div>
<div class="t" style="left:640.7px;top:371.51px;font-size:32px;color:#f4f4f4;font-weight:normal;font-family:'Liberation Sans';letter-spacing:1.067px;">Name</div>
<div class="t" style="left:1559.8px;top:371.51px;font-size:32px;color:#f4f4f4;font-weight:normal;font-family:'Liberation Sans';letter-spacing:0.2px;">Namespace</div>
<div class="t" style="left:1824.2px;top:371.51px;font-size:32px;color:#f4f4f4;font-weight:normal;font-family:'Liberation Sans';letter-spacing:0.613px;">Container</div>
<div class="t" style="left:1999px;top:371.51px;font-size:32px;color:#f4f4f4;font-weight:normal;font-family:'Liberation Sans';letter-spacing:-1.2px;">CPU</div>
<div class="t" style="left:2173.6px;top:371.51px;font-size:32px;color:#f4f4f4;font-weight:normal;font-family:'Liberation Sans';letter-spacing:1.2px;">Memory</div>
<div class="t" style="left:2348.7px;top:371.51px;font-size:32px;color:#f4f4f4;font-weight:normal;font-family:'Liberation Sans';letter-spacing:0.329px;">Restarts</div>
<div class="t" style="left:2525.1px;top:371.51px;font-size:32px;color:#f4f4f4;font-weight:normal;font-family:'Liberation Sans';letter-spacing:0.358px;">Controlled By</div>
<div class="t" style="left:2771.6px;top:371.51px;font-size:32px;color:#f4f4f4;font-weight:normal;font-family:'Liberation Sans';letter-spacing:1.2px;">Node</div>
<div class="t" style="left:2948.2px;top:371.51px;font-size:32px;color:#f4f4f4;font-weight:normal;font-family:'Liberation Sans';letter-spacing:-1.2px;">QoS</div>
<div class="t" style="left:3123.8px;top:371.51px;font-size:32px;color:#f4f4f4;font-weight:normal;font-family:'Liberation Sans';letter-spacing:-1.2px;">Age</div>
<div class="t" style="left:3264.8px;top:371.51px;font-size:32px;color:#f4f4f4;font-weight:normal;font-family:'Liberation Sans';letter-spacing:0.28px;">Status</div>
<div style="left:624px;top:367px;width:2px;height:37px;background:#3c3d40;"></div>
<div style="left:1466px;top:367px;width:2px;height:37px;background:#3c3d40;"></div>
<div style="left:1545px;top:367px;width:2px;height:37px;background:#3c3d40;"></div>
<div style="left:1807px;top:367px;width:2px;height:37px;background:#3c3d40;"></div>
<div style="left:1983px;top:367px;width:2px;height:37px;background:#3c3d40;"></div>
<div style="left:2158px;top:367px;width:2px;height:37px;background:#3c3d40;"></div>
<div style="left:2333px;top:367px;width:2px;height:37px;background:#3c3d40;"></div>
<div style="left:2509px;top:367px;width:2px;height:37px;background:#3c3d40;"></div>
<div style="left:2756px;top:367px;width:2px;height:37px;background:#3c3d40;"></div>
<div style="left:2931px;top:367px;width:2px;height:37px;background:#3c3d40;"></div>
<div style="left:3107px;top:367px;width:2px;height:37px;background:#3c3d40;"></div>
<div style="left:3250px;top:367px;width:2px;height:37px;background:#3c3d40;"></div>
<div style="left:3425px;top:367px;width:2px;height:37px;background:#3c3d40;"></div>
<svg style="left:1484px;top:367px;" width="42" height="36" viewBox="0 0 42 36"><path d="M21 2 L40 34 L2 34 Z" fill="#4a4b4e"/><rect x="19" y="13" width="4" height="10" fill="#202124"/><rect x="19" y="26" width="4" height="4" fill="#202124"/></svg>
<div style="left:3458.5px;top:370.0px;width:9px;height:9px;border-radius:50%;background:#f1f1f1;"></div>
<div style="left:3458.5px;top:381.5px;width:9px;height:9px;border-radius:50%;background:#f1f1f1;"></div>
<div style="left:3458.5px;top:393.0px;width:9px;height:9px;border-radius:50%;background:#f1f1f1;"></div>
<div style="left:536px;top:505px;width:3028px;height:2px;background:#2e2f32;"></div>
<div style="left:567px;top:453px;width:22px;height:22px;border:2.5px solid #b8b8ba;border-radius:4px;"></div>
<div class="t" style="left:639.7px;top:451.21px;font-size:32px;color:#a9a9ab;font-weight:normal;font-family:'Liberation Sans';letter-spacing:0.595px;">nginx-fb44b9859-vtqxm</div>
<div class="t" style="left:1560.8px;top:451.21px;font-size:32px;color:#3d90cf;font-weight:normal;font-family:'Liberation Sans';letter-spacing:0.54px;text-decoration:underline;text-underline-offset:4px;text-decoration-thickness:2px;">claude</div>
<div style="left:1824px;top:457px;width:18px;height:18px;background:#4fca4f;"></div>
<div class="t" style="left:1998px;top:451.21px;font-size:32px;color:#a9a9ab;font-weight:normal;font-family:'Liberation Sans';letter-spacing:1.2px;">N/A</div>
<div class="t" style="left:2173.6px;top:451.21px;font-size:32px;color:#a9a9ab;font-weight:normal;font-family:'Liberation Sans';letter-spacing:1.2px;">N/A</div>
<div class="t" style="left:2349px;top:451.21px;font-size:32px;color:#a9a9ab;font-weight:normal;font-family:'Liberation Sans';letter-spacing:0px;">1</div>
<div class="t" style="left:2524.1px;top:451.21px;font-size:32px;color:#3d90cf;font-weight:normal;font-family:'Liberation Sans';letter-spacing:-0.422px;text-decoration:underline;text-underline-offset:4px;text-decoration-thickness:2px;">ReplicaSet</div>
<div class="t" style="left:2771.6px;top:451.21px;font-size:32px;color:#3d90cf;font-weight:normal;font-family:'Liberation Sans';letter-spacing:1.2px;text-decoration:underline;text-underline-offset:4px;text-decoration-thickness:2px;">minikube</div>
<div style="left:2949px;top:428.0px;width:140px;height:78.86px;overflow:hidden;">
<div class="t" style="left:0px;top:22.61px;font-size:32px;color:#a9a9ab;letter-spacing:0.4px;">Burstable</div></div>
<div class="t" style="left:3122.8px;top:451.21px;font-size:32px;color:#a9a9ab;font-weight:normal;font-family:'Liberation Sans';letter-spacing:0.85px;">5d22h</div>
<div class="t" style="left:3264.8px;top:451.21px;font-size:32px;color:#4cb04f;font-weight:normal;font-family:'Liberation Sans';letter-spacing:0.517px;">Running</div>
<div style="left:3458.5px;top:450.0px;width:9px;height:9px;border-radius:50%;background:#c8c8ca;"></div>
<div style="left:3458.5px;top:461.5px;width:9px;height:9px;border-radius:50%;background:#c8c8ca;"></div>
<div style="left:3458.5px;top:473.0px;width:9px;height:9px;border-radius:50%;background:#c8c8ca;"></div>
<div style="left:536px;top:584px;width:3028px;height:2px;background:#2e2f32;"></div>
<div style="left:567px;top:532px;width:22px;height:22px;border:2.5px solid #b8b8ba;border-radius:4px;"></div>
<div class="t" style="left:639.7px;top:530.07px;font-size:32px;color:#a9a9ab;font-weight:normal;font-family:'Liberation Sans';letter-spacing:0.188px;">nginx-app-7c8cf5c678-8qhfk</div>
<div class="t" style="left:1560.8px;top:530.07px;font-size:32px;color:#3d90cf;font-weight:normal;font-family:'Liberation Sans';letter-spacing:1.167px;text-decoration:underline;text-underline-offset:4px;text-decoration-thickness:2px;">default</div>
<div style="left:1824px;top:536px;width:18px;height:18px;background:#4fca4f;"></div>
<div class="t" style="left:1998px;top:530.07px;font-size:32px;color:#a9a9ab;font-weight:normal;font-family:'Liberation Sans';letter-spacing:1.2px;">N/A</div>
<div class="t" style="left:2173.6px;top:530.07px;font-size:32px;color:#a9a9ab;font-weight:normal;font-family:'Liberation Sans';letter-spacing:1.2px;">N/A</div>
<div class="t" style="left:2349px;top:530.07px;font-size:32px;color:#a9a9ab;font-weight:normal;font-family:'Liberation Sans';letter-spacing:0px;">1</div>
<div class="t" style="left:2524.1px;top:530.07px;font-size:32px;color:#3d90cf;font-weight:normal;font-family:'Liberation Sans';letter-spacing:-0.422px;text-decoration:underline;text-underline-offset:4px;text-decoration-thickness:2px;">ReplicaSet</div>
<div class="t" style="left:2771.6px;top:530.07px;font-size:32px;color:#3d90cf;font-weight:normal;font-family:'Liberation Sans';letter-spacing:1.2px;text-decoration:underline;text-underline-offset:4px;text-decoration-thickness:2px;">minikube</div>
<div style="left:2949px;top:506.9px;width:140px;height:78.86px;overflow:hidden;">
<div class="t" style="left:0px;top:22.61px;font-size:32px;color:#a9a9ab;letter-spacing:0.4px;">Burstable</div></div>
<div class="t" style="left:3122.8px;top:530.07px;font-size:32px;color:#a9a9ab;font-weight:normal;font-family:'Liberation Sans';letter-spacing:1.0px;">26d</div>
<div class="t" style="left:3264.8px;top:530.07px;font-size:32px;color:#4cb04f;font-weight:normal;font-family:'Liberation Sans';letter-spacing:0.517px;">Running</div>
<div style="left:3458.5px;top:528.86px;width:9px;height:9px;border-radius:50%;background:#c8c8ca;"></div>
<div style="left:3458.5px;top:540.36px;width:9px;height:9px;border-radius:50%;background:#c8c8ca;"></div>
<div style="left:3458.5px;top:551.86px;width:9px;height:9px;border-radius:50%;background:#c8c8ca;"></div>
<div style="left:536px;top:663px;width:3028px;height:2px;background:#2e2f32;"></div>
<div style="left:567px;top:611px;width:22px;height:22px;border:2.5px solid #b8b8ba;border-radius:4px;"></div>
<div class="t" style="left:639.7px;top:608.93px;font-size:32px;color:#a9a9ab;font-weight:normal;font-family:'Liberation Sans';letter-spacing:0.148px;">nginx-app-7c8cf5c678-q9kq4</div>
<div class="t" style="left:1560.8px;top:608.93px;font-size:32px;color:#3d90cf;font-weight:normal;font-family:'Liberation Sans';letter-spacing:1.167px;text-decoration:underline;text-underline-offset:4px;text-decoration-thickness:2px;">default</div>
<div style="left:1824px;top:615px;width:18px;height:18px;background:#4fca4f;"></div>
<div class="t" style="left:1998px;top:608.93px;font-size:32px;color:#a9a9ab;font-weight:normal;font-family:'Liberation Sans';letter-spacing:1.2px;">N/A</div>
<div class="t" style="left:2173.6px;top:608.93px;font-size:32px;color:#a9a9ab;font-weight:normal;font-family:'Liberation Sans';letter-spacing:1.2px;">N/A</div>
<div class="t" style="left:2349px;top:608.93px;font-size:32px;color:#a9a9ab;font-weight:normal;font-family:'Liberation Sans';letter-spacing:0px;">1</div>
<div class="t" style="left:2524.1px;top:608.93px;font-size:32px;color:#3d90cf;font-weight:normal;font-family:'Liberation Sans';letter-spacing:-0.422px;text-decoration:underline;text-underline-offset:4px;text-decoration-thickness:2px;">ReplicaSet</div>
<div class="t" style="left:2771.6px;top:608.93px;font-size:32px;color:#3d90cf;font-weight:normal;font-family:'Liberation Sans';letter-spacing:1.2px;text-decoration:underline;text-underline-offset:4px;text-decoration-thickness:2px;">minikube</div>
<div style="left:2949px;top:585.7px;width:140px;height:78.86px;overflow:hidden;">
<div class="t" style="left:0px;top:22.61px;font-size:32px;color:#a9a9ab;letter-spacing:0.4px;">Burstable</div></div>
<div class="t" style="left:3122.8px;top:608.93px;font-size:32px;color:#a9a9ab;font-weight:normal;font-family:'Liberation Sans';letter-spacing:1.0px;">26d</div>
<div class="t" style="left:3264.8px;top:608.93px;font-size:32px;color:#4cb04f;font-weight:normal;font-family:'Liberation Sans';letter-spacing:0.517px;">Running</div>
<div style="left:3458.5px;top:607.72px;width:9px;height:9px;border-radius:50%;background:#c8c8ca;"></div>
<div style="left:3458.5px;top:619.22px;width:9px;height:9px;border-radius:50%;background:#c8c8ca;"></div>
<div style="left:3458.5px;top:630.72px;width:9px;height:9px;border-radius:50%;background:#c8c8ca;"></div>
<div style="left:536px;top:741px;width:3028px;height:2px;background:#2e2f32;"></div>
<div style="left:567px;top:690px;width:22px;height:22px;border:2.5px solid #b8b8ba;border-radius:4px;"></div>
<div class="t" style="left:639.7px;top:687.79px;font-size:32px;color:#a9a9ab;font-weight:normal;font-family:'Liberation Sans';letter-spacing:0.112px;">nginx-app-7c8cf5c678-vdzlb</div>
<div class="t" style="left:1560.8px;top:687.79px;font-size:32px;color:#3d90cf;font-weight:normal;font-family:'Liberation Sans';letter-spacing:1.167px;text-decoration:underline;text-underline-offset:4px;text-decoration-thickness:2px;">default</div>
<div style="left:1824px;top:694px;width:18px;height:18px;background:#4fca4f;"></div>
<div class="t" style="left:1998px;top:687.79px;font-size:32px;color:#a9a9ab;font-weight:normal;font-family:'Liberation Sans';letter-spacing:1.2px;">N/A</div>
<div class="t" style="left:2173.6px;top:687.79px;font-size:32px;color:#a9a9ab;font-weight:normal;font-family:'Liberation Sans';letter-spacing:1.2px;">N/A</div>
<div class="t" style="left:2349px;top:687.79px;font-size:32px;color:#a9a9ab;font-weight:normal;font-family:'Liberation Sans';letter-spacing:0px;">1</div>
<div class="t" style="left:2524.1px;top:687.79px;font-size:32px;color:#3d90cf;font-weight:normal;font-family:'Liberation Sans';letter-spacing:-0.422px;text-decoration:underline;text-underline-offset:4px;text-decoration-thickness:2px;">ReplicaSet</div>
<div class="t" style="left:2771.6px;top:687.79px;font-size:32px;color:#3d90cf;font-weight:normal;font-family:'Liberation Sans';letter-spacing:1.2px;text-decoration:underline;text-underline-offset:4px;text-decoration-thickness:2px;">minikube</div>
<div style="left:2949px;top:664.6px;width:140px;height:78.86px;overflow:hidden;">
<div class="t" style="left:0px;top:22.61px;font-size:32px;color:#a9a9ab;letter-spacing:0.4px;">Burstable</div></div>
<div class="t" style="left:3122.8px;top:687.79px;font-size:32px;color:#a9a9ab;font-weight:normal;font-family:'Liberation Sans';letter-spacing:1.0px;">26d</div>
<div class="t" style="left:3264.8px;top:687.79px;font-size:32px;color:#4cb04f;font-weight:normal;font-family:'Liberation Sans';letter-spacing:0.517px;">Running</div>
<div style="left:3458.5px;top:686.5799999999999px;width:9px;height:9px;border-radius:50%;background:#c8c8ca;"></div>
<div style="left:3458.5px;top:698.0799999999999px;width:9px;height:9px;border-radius:50%;background:#c8c8ca;"></div>
<div style="left:3458.5px;top:709.5799999999999px;width:9px;height:9px;border-radius:50%;background:#c8c8ca;"></div>
<div style="left:536px;top:820px;width:3028px;height:2px;background:#2e2f32;"></div>
<div style="left:567px;top:768px;width:22px;height:22px;border:2.5px solid #b8b8ba;border-radius:4px;"></div>
<div class="t" style="left:641.7px;top:766.65px;font-size:32px;color:#a9a9ab;font-weight:normal;font-family:'Liberation Sans';letter-spacing:0.114px;">web-v1-7d49f4fc45-7vn4j</div>
<div class="t" style="left:1560.8px;top:766.65px;font-size:32px;color:#3d90cf;font-weight:normal;font-family:'Liberation Sans';letter-spacing:1.167px;text-decoration:underline;text-underline-offset:4px;text-decoration-thickness:2px;">default</div>
<div style="left:1824px;top:772px;width:18px;height:18px;background:#4fca4f;"></div>
<div class="t" style="left:1998px;top:766.65px;font-size:32px;color:#a9a9ab;font-weight:normal;font-family:'Liberation Sans';letter-spacing:1.2px;">N/A</div>
<div class="t" style="left:2173.6px;top:766.65px;font-size:32px;color:#a9a9ab;font-weight:normal;font-family:'Liberation Sans';letter-spacing:1.2px;">N/A</div>
<div class="t" style="left:2349px;top:766.65px;font-size:32px;color:#a9a9ab;font-weight:normal;font-family:'Liberation Sans';letter-spacing:0px;">3</div>
<div class="t" style="left:2524.1px;top:766.65px;font-size:32px;color:#3d90cf;font-weight:normal;font-family:'Liberation Sans';letter-spacing:-0.422px;text-decoration:underline;text-underline-offset:4px;text-decoration-thickness:2px;">ReplicaSet</div>
<div class="t" style="left:2771.6px;top:766.65px;font-size:32px;color:#3d90cf;font-weight:normal;font-family:'Liberation Sans';letter-spacing:1.2px;text-decoration:underline;text-underline-offset:4px;text-decoration-thickness:2px;">minikube</div>
<div style="left:2949px;top:743.4px;width:140px;height:78.86px;overflow:hidden;">
<div class="t" style="left:0px;top:22.61px;font-size:32px;color:#a9a9ab;letter-spacing:0.4px;">BestEffort</div></div>
<div class="t" style="left:3121.8px;top:766.65px;font-size:32px;color:#a9a9ab;font-weight:normal;font-family:'Liberation Sans';letter-spacing:1.2px;">111d</div>
<div class="t" style="left:3264.8px;top:766.65px;font-size:32px;color:#4cb04f;font-weight:normal;font-family:'Liberation Sans';letter-spacing:0.517px;">Running</div>
<div style="left:3458.5px;top:765.44px;width:9px;height:9px;border-radius:50%;background:#c8c8ca;"></div>
<div style="left:3458.5px;top:776.94px;width:9px;height:9px;border-radius:50%;background:#c8c8ca;"></div>
<div style="left:3458.5px;top:788.44px;width:9px;height:9px;border-radius:50%;background:#c8c8ca;"></div>
<div style="left:536px;top:899px;width:3028px;height:2px;background:#2e2f32;"></div>
<div style="left:567px;top:847px;width:22px;height:22px;border:2.5px solid #b8b8ba;border-radius:4px;"></div>
<div class="t" style="left:641.7px;top:845.51px;font-size:32px;color:#a9a9ab;font-weight:normal;font-family:'Liberation Sans';letter-spacing:0.214px;">web-v1-7d49f4fc45-jp82n</div>
<div class="t" style="left:1560.8px;top:845.51px;font-size:32px;color:#3d90cf;font-weight:normal;font-family:'Liberation Sans';letter-spacing:1.167px;text-decoration:underline;text-underline-offset:4px;text-decoration-thickness:2px;">default</div>
<div style="left:1824px;top:851px;width:18px;height:18px;background:#4fca4f;"></div>
<div class="t" style="left:1998px;top:845.51px;font-size:32px;color:#a9a9ab;font-weight:normal;font-family:'Liberation Sans';letter-spacing:1.2px;">N/A</div>
<div class="t" style="left:2173.6px;top:845.51px;font-size:32px;color:#a9a9ab;font-weight:normal;font-family:'Liberation Sans';letter-spacing:1.2px;">N/A</div>
<div class="t" style="left:2349px;top:845.51px;font-size:32px;color:#a9a9ab;font-weight:normal;font-family:'Liberation Sans';letter-spacing:0px;">3</div>
<div class="t" style="left:2524.1px;top:845.51px;font-size:32px;color:#3d90cf;font-weight:normal;font-family:'Liberation Sans';letter-spacing:-0.422px;text-decoration:underline;text-underline-offset:4px;text-decoration-thickness:2px;">ReplicaSet</div>
<div class="t" style="left:2771.6px;top:845.51px;font-size:32px;color:#3d90cf;font-weight:normal;font-family:'Liberation Sans';letter-spacing:1.2px;text-decoration:underline;text-underline-offset:4px;text-decoration-thickness:2px;">minikube</div>
<div style="left:2949px;top:822.3px;width:140px;height:78.86px;overflow:hidden;">
<div class="t" style="left:0px;top:22.61px;font-size:32px;color:#a9a9ab;letter-spacing:0.4px;">BestEffort</div></div>
<div class="t" style="left:3121.8px;top:845.51px;font-size:32px;color:#a9a9ab;font-weight:normal;font-family:'Liberation Sans';letter-spacing:1.2px;">111d</div>
<div class="t" style="left:3264.8px;top:845.51px;font-size:32px;color:#4cb04f;font-weight:normal;font-family:'Liberation Sans';letter-spacing:0.517px;">Running</div>
<div style="left:3458.5px;top:844.3px;width:9px;height:9px;border-radius:50%;background:#c8c8ca;"></div>
<div style="left:3458.5px;top:855.8px;width:9px;height:9px;border-radius:50%;background:#c8c8ca;"></div>
<div style="left:3458.5px;top:867.3px;width:9px;height:9px;border-radius:50%;background:#c8c8ca;"></div>
<div style="left:536px;top:978px;width:3028px;height:2px;background:#2e2f32;"></div>
<div style="left:567px;top:926px;width:22px;height:22px;border:2.5px solid #b8b8ba;border-radius:4px;"></div>
<div class="t" style="left:641.7px;top:924.37px;font-size:32px;color:#a9a9ab;font-weight:normal;font-family:'Liberation Sans';letter-spacing:0.123px;">web-v1-7d49f4fc45-qz9wq</div>
<div class="t" style="left:1560.8px;top:924.37px;font-size:32px;color:#3d90cf;font-weight:normal;font-family:'Liberation Sans';letter-spacing:1.167px;text-decoration:underline;text-underline-offset:4px;text-decoration-thickness:2px;">default</div>
<div style="left:1824px;top:930px;width:18px;height:18px;background:#4fca4f;"></div>
<div class="t" style="left:1998px;top:924.37px;font-size:32px;color:#a9a9ab;font-weight:normal;font-family:'Liberation Sans';letter-spacing:1.2px;">N/A</div>
<div class="t" style="left:2173.6px;top:924.37px;font-size:32px;color:#a9a9ab;font-weight:normal;font-family:'Liberation Sans';letter-spacing:1.2px;">N/A</div>
<div class="t" style="left:2349px;top:924.37px;font-size:32px;color:#a9a9ab;font-weight:normal;font-family:'Liberation Sans';letter-spacing:0px;">3</div>
<div class="t" style="left:2524.1px;top:924.37px;font-size:32px;color:#3d90cf;font-weight:normal;font-family:'Liberation Sans';letter-spacing:-0.422px;text-decoration:underline;text-underline-offset:4px;text-decoration-thickness:2px;">ReplicaSet</div>
<div class="t" style="left:2771.6px;top:924.37px;font-size:32px;color:#3d90cf;font-weight:normal;font-family:'Liberation Sans';letter-spacing:1.2px;text-decoration:underline;text-underline-offset:4px;text-decoration-thickness:2px;">minikube</div>
<div style="left:2949px;top:901.2px;width:140px;height:78.86px;overflow:hidden;">
<div class="t" style="left:0px;top:22.61px;font-size:32px;color:#a9a9ab;letter-spacing:0.4px;">BestEffort</div></div>
<div class="t" style="left:3121.8px;top:924.37px;font-size:32px;color:#a9a9ab;font-weight:normal;font-family:'Liberation Sans';letter-spacing:1.2px;">111d</div>
<div class="t" style="left:3264.8px;top:924.37px;font-size:32px;color:#4cb04f;font-weight:normal;font-family:'Liberation Sans';letter-spacing:0.517px;">Running</div>
<div style="left:3458.5px;top:923.16px;width:9px;height:9px;border-radius:50%;background:#c8c8ca;"></div>
<div style="left:3458.5px;top:934.66px;width:9px;height:9px;border-radius:50%;background:#c8c8ca;"></div>
<div style="left:3458.5px;top:946.16px;width:9px;height:9px;border-radius:50%;background:#c8c8ca;"></div>
<div style="left:3576px;top:438px;width:15px;height:88px;background:#3a3b3e;"></div>
<div style="left:3429px;top:851px;width:101px;height:101px;border-radius:50%;background:#3d8fd1;"></div>
<svg style="left:3465px;top:887px;" width="28" height="28" viewBox="0 0 28 28"><path d="M14 0 V28 M0 14 H28" stroke="#ffffff" stroke-width="3.6"/></svg>
<div style="left:536px;top:986px;width:3064px;height:79px;background:#1b1c1e;"></div>
<div style="left:1220px;top:986px;width:2380px;height:2px;background:#2e2f32;"></div>
<div style="left:1218px;top:986px;width:2px;height:79px;background:#2e2f32;"></div>
<div style="left:1220px;top:1063px;width:2380px;height:2px;background:#2e2f32;"></div>
<div style="left:536px;top:986px;width:684px;height:79px;background:#202124;"></div>
<div style="left:536px;top:986px;width:684px;height:5px;background:#d4530c;"></div>
<svg style="left:566px;top:1014px;" width="32" height="27" viewBox="0 0 32 27"><rect x="1.5" y="1.5" width="29" height="24" rx="3" stroke="#d4530c" stroke-width="3" fill="none"/><path d="M7 8 L12 13 L7 18" stroke="#d4530c" stroke-width="2.6" fill="none"/><rect x="14" y="17" width="9" height="3" fill="#d4530c"/></svg>
<div class="t" style="left:615.7px;top:1015.21px;font-size:30px;color:#f4f4f4;font-weight:normal;font-family:'Liberation Sans';letter-spacing:0.008px;">Pod Shell: nginx-app-7c8cf5c678-q9kq4</div>
<svg style="left:1165px;top:1019px;" width="19" height="19" viewBox="0 0 19 19"><path d="M2 2 L17 17 M17 2 L2 17" stroke="#f1f1f1" stroke-width="2.6"/></svg>
<svg style="left:1246px;top:1012px;" width="28" height="28" viewBox="0 0 28 28"><path d="M14 1 V27 M1 14 H27" stroke="#b4b4b6" stroke-width="4"/></svg>
<svg style="left:3486px;top:1013px;" width="26" height="26" viewBox="0 0 26 26"><path d="M1.5 8.5 V1.5 H8.5 M17.5 1.5 H24.5 V8.5 M24.5 17.5 V24.5 H17.5 M8.5 24.5 H1.5 V17.5" stroke="#b4b4b6" stroke-width="3" fill="none"/></svg>
<svg style="left:3547px;top:1018px;" width="26" height="18" viewBox="0 0 26 18"><path d="M3 3 L13 13 L23 3" stroke="#b4b4b6" stroke-width="3.2" fill="none"/></svg>
<div style="left:536px;top:1065px;width:3064px;height:97px;background:#202124;"></div>
<div style="left:536px;top:1162px;width:3064px;height:2px;background:#2e2f32;"></div>
<div style="left:563px;top:1085px;width:656px;height:52px;border:2px solid #3b3c3f;border-radius:10px;background:#1b1c1e;"></div>
<div class="t" style="left:583.1px;top:1101.90px;font-size:28px;color:#a9a9ab;font-weight:normal;font-family:'Liberation Sans';letter-spacing:-1.2px;">Aa</div>
<svg style="left:636px;top:1100px;" width="30" height="30" viewBox="0 0 30 30"><rect x="1.3" y="18.2" width="8.8" height="8.4" fill="#a9a9ab"/><g stroke="#a9a9ab" stroke-width="1.9"><path d="M19.8 0 V18"/><path d="M12.0 4.2 L27.6 13.8"/><path d="M12.0 13.8 L27.6 4.2"/></g></svg>
<div class="t" style="left:691px;top:1101.90px;font-size:28px;color:#a9a9ab;font-weight:normal;font-family:'Liberation Sans';letter-spacing:0.005px;">Search in Terminal...</div>
<div class="t" style="left:1239px;top:1101.90px;font-size:28px;color:#a9a9ab;font-weight:normal;font-family:'Liberation Sans';letter-spacing:-0.5px;">0 / 0</div>
<svg style="left:1317px;top:1107px;" width="26" height="18" viewBox="0 0 26 18"><path d="M3 3 L13 12 L23 3" stroke="#767678" stroke-width="3" fill="none"/></svg>
<svg style="left:1374px;top:1103px;" width="26" height="18" viewBox="0 0 26 18"><path d="M3 14 L13 5 L23 14" stroke="#767678" stroke-width="3" fill="none"/></svg>
<div style="left:536px;top:1164px;width:3064px;height:57px;background:#1b1c1e;"></div>
<div style="left:536px;top:1221px;width:3064px;height:2px;background:#2e2f32;"></div>
<div class="t" style="left:562.5px;top:1177.90px;font-size:28px;color:#b8b8ba;letter-spacing:-0.11px;">Shell into Pod: <span style="color:#3d90cf;text-decoration:underline;text-underline-offset:3px;text-decoration-thickness:2px;">nginx-app-7c8cf5c678-q9kq4</span>, in container: <b style="color:#bcbcbe">nginx</b>, in namespace: <span style="color:#3d90cf;text-decoration:underline;text-underline-offset:3px;text-decoration-thickness:2px;">default</span></div>
<div style="left:536px;top:1223px;width:3064px;height:1067px;background:#000000;"></div>
<div class="t" style="left:571.3px;top:1261.61px;font-family:'Liberation Mono';font-size:26.3px;color:#ececec;white-space:pre;">root@nginx-app-7c8cf5c678-q9kq4:/# ls</div>
<div class="t" style="left:571.3px;top:1292.61px;font-family:'Liberation Mono';font-size:26.3px;color:#ececec;white-space:pre;">bin  boot  dev  docker-entrypoint.d  docker-entrypoint.sh  etc  home  lib  media  mnt  opt  proc  root  run  sbin  srv  sys  tmp  usr  var</div>
<div class="t" style="left:571.3px;top:1323.61px;font-family:'Liberation Mono';font-size:26.3px;color:#ececec;white-space:pre;">root@nginx-app-7c8cf5c678-q9kq4:/# cd usr</div>
<div class="t" style="left:571.3px;top:1354.61px;font-family:'Liberation Mono';font-size:26.3px;color:#ececec;white-space:pre;">root@nginx-app-7c8cf5c678-q9kq4:/usr# ls -lart</div>
<div class="t" style="left:571.3px;top:1385.61px;font-family:'Liberation Mono';font-size:26.3px;color:#ececec;white-space:pre;">total 44</div>
<div class="t" style="left:571.3px;top:1416.61px;font-family:'Liberation Mono';font-size:26.3px;color:#ececec;white-space:pre;">drwxr-xr-x 2 root root 4096 Jan 28  2024 src</div>
<div class="t" style="left:571.3px;top:1447.61px;font-family:'Liberation Mono';font-size:26.3px;color:#ececec;white-space:pre;">drwxr-xr-x 2 root root 4096 Jan 28  2024 include</div>
<div class="t" style="left:571.3px;top:1478.61px;font-family:'Liberation Mono';font-size:26.3px;color:#ececec;white-space:pre;">drwxr-xr-x 2 root root 4096 Jan 28  2024 games</div>
<div class="t" style="left:571.3px;top:1509.61px;font-family:'Liberation Mono';font-size:26.3px;color:#ececec;white-space:pre;">drwxr-xr-x 1 root root 4096 May 13  2024 local</div>
<div class="t" style="left:571.3px;top:1540.61px;font-family:'Liberation Mono';font-size:26.3px;color:#ececec;white-space:pre;">drwxr-xr-x 4 root root 4096 May 13  2024 libexec</div>
<div class="t" style="left:571.3px;top:1571.61px;font-family:'Liberation Mono';font-size:26.3px;color:#ececec;white-space:pre;">drwxr-xr-x 1 root root 4096 May 13  2024 .</div>
<div class="t" style="left:571.3px;top:1602.61px;font-family:'Liberation Mono';font-size:26.3px;color:#ececec;white-space:pre;">drwxr-xr-x 1 root root 4096 May 14  2024 lib</div>
<div class="t" style="left:571.3px;top:1633.61px;font-family:'Liberation Mono';font-size:26.3px;color:#ececec;white-space:pre;">drwxr-xr-x 1 root root 4096 May 14  2024 share</div>
<div class="t" style="left:571.3px;top:1664.61px;font-family:'Liberation Mono';font-size:26.3px;color:#ececec;white-space:pre;">drwxr-xr-x 1 root root 4096 May 14  2024 sbin</div>
<div class="t" style="left:571.3px;top:1695.61px;font-family:'Liberation Mono';font-size:26.3px;color:#ececec;white-space:pre;">drwxr-xr-x 1 root root 4096 May 14  2024 bin</div>
<div class="t" style="left:571.3px;top:1726.61px;font-family:'Liberation Mono';font-size:26.3px;color:#ececec;white-space:pre;">drwxr-xr-x 1 root root 4096 Feb  6 02:13 ..</div>
<div class="t" style="left:571.3px;top:1757.61px;font-family:'Liberation Mono';font-size:26.3px;color:#ececec;white-space:pre;">root@nginx-app-7c8cf5c678-q9kq4:/usr# </div>
<div style="left:1171px;top:1754px;width:2.2px;height:31px;background:#ececec;"></div>
<div style="left:0px;top:2290px;width:3600px;height:2px;background:#333437;"></div>
<div style="left:0px;top:2292px;width:3600px;height:46px;background:#202124;"></div>
<svg style="left:27px;top:2297px;color:#d4530c" width="32" height="32" viewBox="0 0 100 100"><use href="#k8s"/></svg>
<div class="t" style="left:68.6px;top:2301.74px;font-size:27px;color:#e4e4e6;font-weight:normal;font-family:'Liberation Sans';letter-spacing:0.459px;">minikube (v1.34.0)</div>
<svg style="left:3428px;top:2296px;" width="34" height="34" viewBox="0 0 34 34"><circle cx="17" cy="17" r="16.5" fill="#eeeeef"/><circle cx="17" cy="17" r="9.4" fill="none" stroke="#202124" stroke-width="6.2"/><rect x="13.8" y="3" width="6.4" height="28" fill="#eeeeef"/><rect x="3" y="13.8" width="28" height="6.4" fill="#eeeeef"/><circle cx="17" cy="17" r="4.4" fill="#202124"/></svg>
<div class="t" style="left:3473px;top:2299.90px;font-size:28px;color:#eeeeee;font-weight:normal;font-family:'Liberation Sans';letter-spacing:0.333px;">Support</div>
</div></body></html>
